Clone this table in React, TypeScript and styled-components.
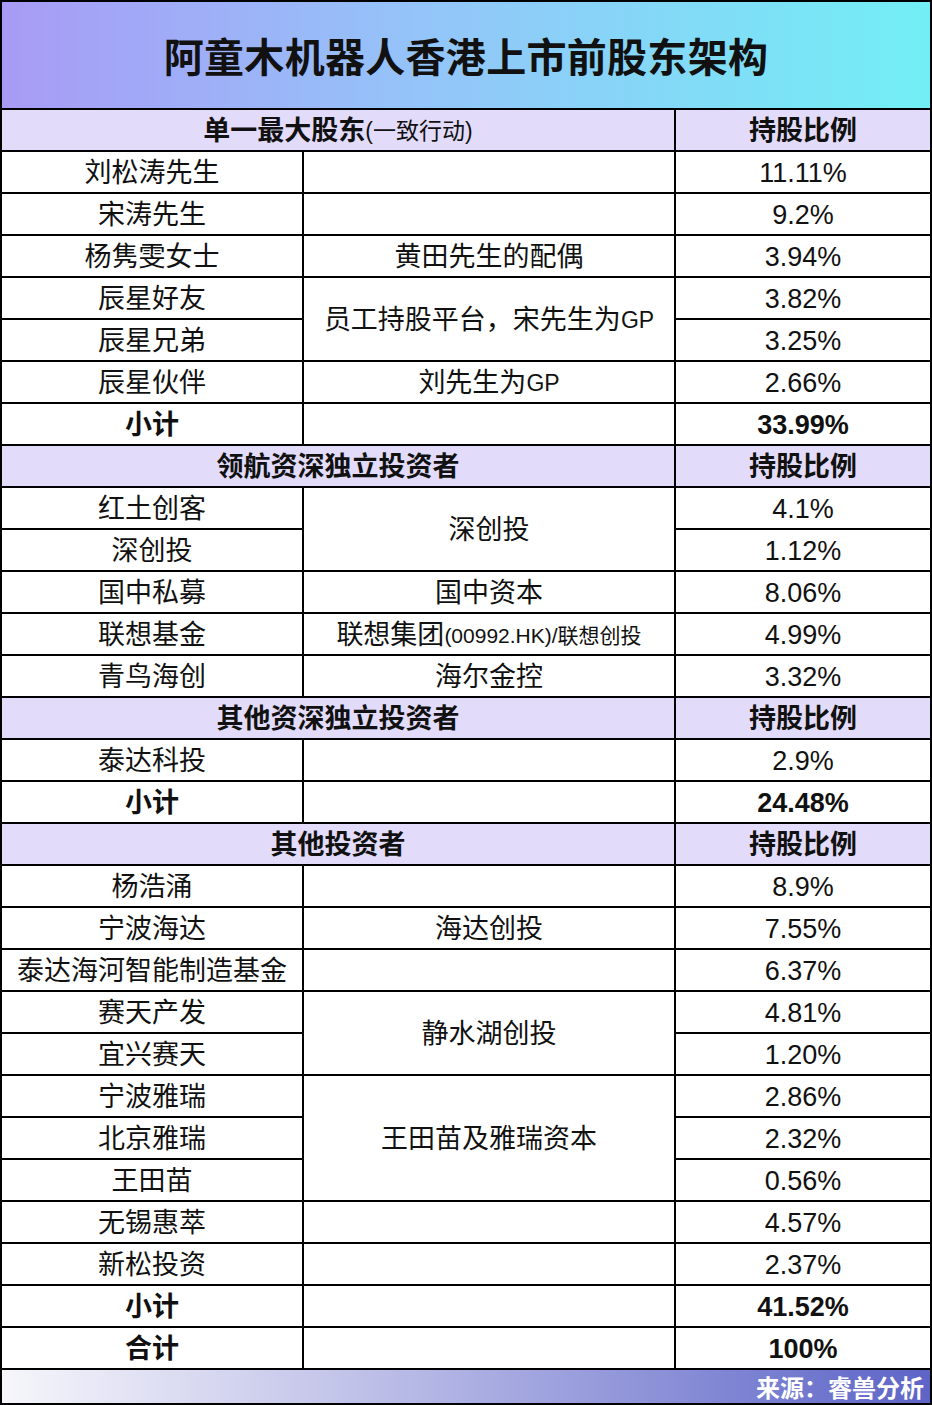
import React from "react";
import styled, { createGlobalStyle } from "styled-components";

const GlobalStyle = createGlobalStyle`
  body {
    margin: 0;
    background: #ffffff;
    font-family: "Liberation Sans", "Noto Sans CJK SC", sans-serif;
  }
`;

type Cell = {
  text: React.ReactNode;
  col: number;
  span?: number;
  colSpan?: number;
  head?: boolean;
  bold?: boolean;
};

const Small = styled.span<{ $light?: boolean; $size?: number }>`
  font-size: ${(p) => p.$size ?? 23}px;
  font-weight: ${(p) => (p.$light ? 400 : "inherit")};
`;

const rows: Cell[][] = [
  [
    {
      text: (
        <>
          单一最大股东<Small $light>(一致行动)</Small>
        </>
      ),
      col: 1,
      colSpan: 2,
      head: true,
    },
    { text: "持股比例", col: 3, head: true },
  ],
  [{ text: "刘松涛先生", col: 1 }, { text: "", col: 2 }, { text: "11.11%", col: 3 }],
  [{ text: "宋涛先生", col: 1 }, { text: "", col: 2 }, { text: "9.2%", col: 3 }],
  [{ text: "杨隽雯女士", col: 1 }, { text: "黄田先生的配偶", col: 2 }, { text: "3.94%", col: 3 }],
  [
    { text: "辰星好友", col: 1 },
    {
      text: (
        <>
          员工持股平台，宋先生为<Small>GP</Small>
        </>
      ),
      col: 2,
      span: 2,
    },
    { text: "3.82%", col: 3 },
  ],
  [{ text: "辰星兄弟", col: 1 }, { text: "3.25%", col: 3 }],
  [
    { text: "辰星伙伴", col: 1 },
    {
      text: (
        <>
          刘先生为<Small>GP</Small>
        </>
      ),
      col: 2,
    },
    { text: "2.66%", col: 3 },
  ],
  [{ text: "小计", col: 1, bold: true }, { text: "", col: 2 }, { text: "33.99%", col: 3, bold: true }],
  [
    { text: "领航资深独立投资者", col: 1, colSpan: 2, head: true },
    { text: "持股比例", col: 3, head: true },
  ],
  [{ text: "红土创客", col: 1 }, { text: "深创投", col: 2, span: 2 }, { text: "4.1%", col: 3 }],
  [{ text: "深创投", col: 1 }, { text: "1.12%", col: 3 }],
  [{ text: "国中私募", col: 1 }, { text: "国中资本", col: 2 }, { text: "8.06%", col: 3 }],
  [
    { text: "联想基金", col: 1 },
    {
      text: (
        <>
          联想集团<Small $size={21}>(00992.HK)/联想创投</Small>
        </>
      ),
      col: 2,
    },
    { text: "4.99%", col: 3 },
  ],
  [{ text: "青鸟海创", col: 1 }, { text: "海尔金控", col: 2 }, { text: "3.32%", col: 3 }],
  [
    { text: "其他资深独立投资者", col: 1, colSpan: 2, head: true },
    { text: "持股比例", col: 3, head: true },
  ],
  [{ text: "泰达科投", col: 1 }, { text: "", col: 2 }, { text: "2.9%", col: 3 }],
  [{ text: "小计", col: 1, bold: true }, { text: "", col: 2 }, { text: "24.48%", col: 3, bold: true }],
  [
    { text: "其他投资者", col: 1, colSpan: 2, head: true },
    { text: "持股比例", col: 3, head: true },
  ],
  [{ text: "杨浩涌", col: 1 }, { text: "", col: 2 }, { text: "8.9%", col: 3 }],
  [{ text: "宁波海达", col: 1 }, { text: "海达创投", col: 2 }, { text: "7.55%", col: 3 }],
  [{ text: "泰达海河智能制造基金", col: 1 }, { text: "", col: 2 }, { text: "6.37%", col: 3 }],
  [{ text: "赛天产发", col: 1 }, { text: "静水湖创投", col: 2, span: 2 }, { text: "4.81%", col: 3 }],
  [{ text: "宜兴赛天", col: 1 }, { text: "1.20%", col: 3 }],
  [{ text: "宁波雅瑞", col: 1 }, { text: "王田苗及雅瑞资本", col: 2, span: 3 }, { text: "2.86%", col: 3 }],
  [{ text: "北京雅瑞", col: 1 }, { text: "2.32%", col: 3 }],
  [{ text: "王田苗", col: 1 }, { text: "0.56%", col: 3 }],
  [{ text: "无锡惠萃", col: 1 }, { text: "", col: 2 }, { text: "4.57%", col: 3 }],
  [{ text: "新松投资", col: 1 }, { text: "", col: 2 }, { text: "2.37%", col: 3 }],
  [{ text: "小计", col: 1, bold: true }, { text: "", col: 2 }, { text: "41.52%", col: 3, bold: true }],
  [{ text: "合计", col: 1, bold: true }, { text: "", col: 2 }, { text: "100%", col: 3, bold: true }],
];

export default function App() {
  return (
    <>
      <GlobalStyle />
      <Frame>
        <Title>阿童木机器人香港上市前股东架构</Title>
        <Table>
          {rows.map((row, r) =>
            row.map((c, i) => (
              <Td
                key={`${r}-${i}`}
                $row={r + 1}
                $col={c.col}
                $span={c.span ?? 1}
                $colSpan={c.colSpan ?? 1}
                $head={!!c.head}
                $bold={!!c.bold}
              >
                {c.text}
              </Td>
            ))
          )}
        </Table>
        <Footer>来源：睿兽分析</Footer>
      </Frame>
    </>
  );
}

const Frame = styled.div`
  width: 932px;
  box-sizing: border-box;
  border: 2px solid #000;
  background: #000;
  display: flex;
  flex-direction: column;
`;

const Title = styled.div`
  height: 106px;
  display: flex;
  align-items: center;
  justify-content: center;
  background: linear-gradient(90deg, #a89bf5 0%, #94c4f9 45%, #72eff5 100%);
  font-size: 40px;
  font-weight: 700;
  color: #111;
  letter-spacing: 0.3px;
`;

const Table = styled.div`
  display: grid;
  grid-template-columns: 300px 370px 254px;
  grid-auto-rows: 40px;
  gap: 2px;
  padding: 2px 0;
  background: #000;
`;

const Td = styled.div<{
  $row: number;
  $col: number;
  $span: number;
  $colSpan: number;
  $head: boolean;
  $bold: boolean;
}>`
  grid-row: ${(p) => p.$row} / span ${(p) => p.$span};
  grid-column: ${(p) => p.$col} / span ${(p) => p.$colSpan};
  display: flex;
  align-items: center;
  justify-content: center;
  padding-top: 2px;
  box-sizing: border-box;
  background: ${(p) => (p.$head ? "#e2dcfa" : "#ffffff")};
  font-size: 27px;
  font-weight: ${(p) => (p.$head || p.$bold ? 700 : 400)};
  color: #111;
  white-space: nowrap;
  line-height: 1;
`;

const Footer = styled.div`
  height: 33px;
  display: flex;
  align-items: center;
  justify-content: flex-end;
  padding-right: 6px;
  background: linear-gradient(90deg, #f6f6fb 0%, #c5c6ea 35%, #8d92d8 70%, #5d64c6 100%);
  color: #fff;
  font-size: 24px;
  font-weight: 700;
`;
